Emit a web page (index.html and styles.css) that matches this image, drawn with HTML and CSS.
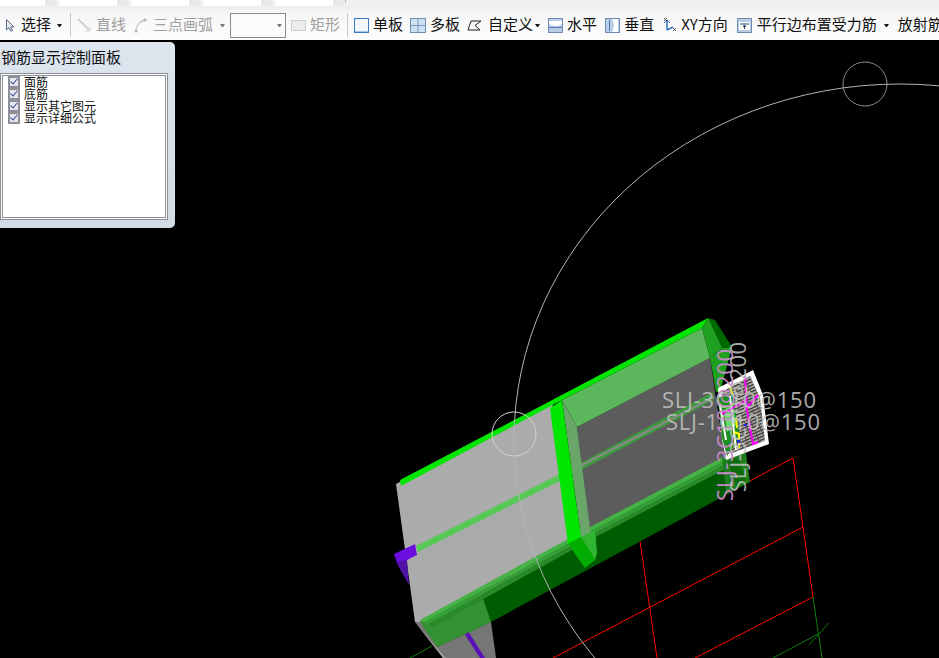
FILE: index.html
```html
<!DOCTYPE html>
<html lang="zh">
<head>
<meta charset="utf-8">
<title>钢筋显示控制面板</title>
<link rel="stylesheet" href="styles.css">
</head>
<body>
<div class="app">
  <div class="tabstrip">
    <span class="tab first"></span><span class="tab"></span><span class="tab"></span><span class="tab"></span><span class="tab"></span><span class="tabsep"></span>
  </div>
  <div class="toolbar">
    <div class="tool t-select">
      <svg class="ico-cursor" width="10" height="15" viewBox="0 0 10 15"><path d="M1.5 1.5v10.5l2.6-2.4 1.8 3.6 1.6-.8-1.8-3.500h3.200z" fill="#e8ecf4" stroke="#5f6f8c"/></svg>
      <span>选择</span>
    </div>
    <i class="caret c-select"></i>
    <i class="sep s1"></i>
    <div class="tool off t-line">
      <svg width="14" height="15" viewBox="0 0 14 15"><path d="M1 1l11 11" stroke="#c4c4c4" stroke-width="1.600"/><path d="M8 13h5V8" fill="none" stroke="#d8d8d8"/></svg>
      <span>直线</span>
    </div>
    <div class="tool off t-arc">
      <svg width="13" height="15" viewBox="0 0 13 15"><path d="M2 13C2 7 6 3 11 2" fill="none" stroke="#c8c8c8" stroke-width="1.300"/><circle cx="2" cy="13" r="1.600" fill="#b4b4b4"/><circle cx="11" cy="2" r="1.600" fill="#b4b4b4"/></svg>
      <span>三点画弧</span>
    </div>
    <i class="caret muted c-arc"></i>
    <div class="combo"><i class="caret muted"></i></div>
    <div class="tool off t-rect">
      <svg width="15" height="11" viewBox="0 0 15 11"><rect x=".5" y=".5" width="14" height="10" fill="#ececec" stroke="#cfcfcf"/></svg>
      <span>矩形</span>
    </div>
    <i class="sep s2"></i>
    <div class="tool t-board">
      <svg width="15" height="15" viewBox="0 0 15 15"><rect x=".5" y=".5" width="14" height="14" fill="#f2f7fd" stroke="#3f78c4"/><path d="M1 13.500h13" stroke="#a8c4ea"/></svg>
      <span>单板</span>
    </div>
    <div class="tool t-multi">
      <svg width="16" height="15" viewBox="0 0 16 15"><rect x=".5" y=".5" width="15" height="14" fill="#cfe0f2" stroke="#6d8db3"/><path d="M8 1v13M1 7.500h14" stroke="#7c9ac0"/></svg>
      <span>多板</span>
    </div>
    <div class="tool t-custom">
      <svg width="16" height="13" viewBox="0 0 16 13"><path d="M4 2h10L8 6.500l5 4.500H1z" fill="none" stroke="#222"/></svg>
      <span>自定义</span>
    </div>
    <i class="caret c-custom"></i>
    <div class="tool t-h">
      <svg width="15" height="15" viewBox="0 0 15 15"><rect x=".5" y=".5" width="14" height="14" fill="#b9cde6" stroke="#6d8db3"/><path d="M1 3h13v3c-4 2.500-9 2.500-13 0z" fill="#fff"/><path d="M1 9.500h13" stroke="#4f79ad"/></svg>
      <span>水平</span>
    </div>
    <div class="tool t-v">
      <svg width="15" height="15" viewBox="0 0 15 15"><rect x=".5" y=".5" width="14" height="14" fill="#b9cde6" stroke="#6d8db3"/><path d="M7 1h6v13H7c2.500-4 2.500-9 0-13z" fill="#fff"/><path d="M4.500 2v11" stroke="#4f79ad"/></svg>
      <span>垂直</span>
    </div>
    <div class="tool t-xy">
      <svg width="16" height="16" viewBox="0 0 16 16"><path d="M6 4v9M6 13l6-3" fill="none" stroke="#2f6fc0" stroke-width="1.500"/><path d="M3 6l3-3 3 3" fill="none" stroke="#2f6fc0"/><path d="M3 1l3 3M6 1L3 4M12 11l3 3M15 11l-3 3" stroke="#333" stroke-width=".8"/></svg>
      <span>XY方向</span>
    </div>
    <div class="tool t-par">
      <svg width="15" height="15" viewBox="0 0 15 15"><rect x=".5" y=".5" width="14" height="14" fill="#b9cde6" stroke="#6d8db3"/><rect x="2" y="4" width="11" height="8" fill="#fff"/><path d="M3 6h9M7.500 7v4M6 9l1.500-2L9 9" fill="none" stroke="#27466f"/></svg>
      <span>平行边布置受力筋</span>
    </div>
    <i class="caret c-par"></i>
    <div class="tool t-last"><span>放射筋</span></div>
  </div>
  <div class="viewport">
    <svg class="scene" width="939" height="618" viewBox="0 40 939 618">
      <defs>
        <pattern id="hatch" width="6" height="3" patternUnits="userSpaceOnUse" patternTransform="rotate(-24)">
          <rect width="6" height="3" fill="#b8b4ac"/>
          <rect y="0" width="6" height="1.300" fill="#2a2a2a"/>
          <rect x="4" width="1" height="3" fill="#555"/>
        </pattern>
      </defs>
      <!-- grid -->
      <g fill="none">
        <path stroke="#ff0000" d="M748 482L793 458 813 597 695 658M803 527L553 658M640 541L657 658"/>
        <path stroke="#0b7f0b" d="M813 597L822 658M773 658L818 634M809 645L829 623M410 658L432 646"/>
      </g>
      <circle cx="865" cy="84" r="22" fill="none" stroke="#8c8c8c"/>
      <!-- lower column -->
      <path fill="#767676" d="M415 622L491 622 496 658 443 658z"/>
      <path fill="#9a9a9a" d="M415 622L430 640 446 658 443 658z"/>
      <path fill="#2f6f6f" d="M451 611L455 609 468 631 464 633z"/>
      <path fill="#5a10b8" d="M464 633L468 631 485 658 480 658z"/>
      <!-- grey slab -->
      <path fill="#ababab" d="M396 484L552 401 570 546 420 622 415 622z"/>
      <!-- dark panel -->
      <path fill="#5c5c5c" d="M577 427L710 358 725 458 590 532z"/>
      <!-- dark green band -->
      <path fill="#005c00" d="M428 624L590 530 725 460 743 455 750 482 491 622 437 647z"/>
      <path fill="#339133" d="M420 622L480 590 491 622 437 647z"/>
      <path fill="#45b245" d="M420 620L590 527 725 456 725 461 590 532 424 622z"/>
      <path fill="#369e36" d="M424 622L590 532 725 461 725 465 590 536 428 624z"/>
      <path fill="#2a8a2a" d="M428 624L590 536 725 465 725 469 590 540 433 627z"/>
      <!-- rail -->
      <path fill="#57c957" d="M416 546L562 473 562 480 418 552z"/>
      <path fill="#3e9a3e" d="M562 473L713 392 714 400 562 480z"/>
      <path fill="none" stroke="#8a8a8a" stroke-width="2" d="M580 466L714 397"/>
      <!-- transparent cap -->
      <path fill="#5cb75c" d="M562 400L702 328 710 358 577 427z"/>
      <path fill="#6aa66a" d="M562 400L577 427 590 528 597 553 581 537z"/>
      <!-- bright green -->
      <path fill="#00e600" d="M400 480L708 318 702 328 562 400 401 486z"/>
      <path fill="#00e600" d="M550 408L562 400 581 537 568 544z"/>
      <path fill="#00ad00" d="M568 544L581 537 595 560 585 568z"/>
      <path fill="#2fb52f" d="M581 537L595 530 597 553 595 560z"/>
      <path fill="#1fa01f" d="M710 358L722 348 732 347 720 392 716 392z"/>
      <path fill="#20a020" d="M702 328L708 318 712 320 722 348 710 358z"/>
      <path fill="#006a00" d="M708 318L715 320 732 347 722 348z"/>
      <path fill="#1f7f1f" d="M722 458L745 447 750 482 726 492z"/>
      <path fill="#0d6d0d" d="M728 462L738 457 746 480 736 486z"/>
      <!-- purple corner -->
      <path fill="#6a0fe0" d="M394 554L415 544 417 555 407 560 405 567 397 563z"/>
      <path fill="#4e12a8" d="M396 562L407 560 409 585z"/>
      <circle cx="514" cy="434" r="22" fill="none" stroke="#d4d4d4"/>
      <ellipse cx="900" cy="440" rx="386" ry="356" fill="none" stroke="#b4b4b4"/>
      <!-- rebar cluster -->
      <path fill="#fff" d="M718 388L753 370 763 395 769 444 726 460 722 440z"/>
      <path fill="url(#hatch)" d="M722 392L750 376 760 398 765 441 732 453 726 438z"/>
      <path fill="#1c8f1c" d="M718 398L732 392 740 438 727 456 722 438z"/>
      <path fill="#6fd86f" d="M724 410L733 404 736 425 727 432z"/>
      <path fill="none" stroke="#fff" stroke-width="2" d="M720 405L726 440M730 396L736 450"/>
      <path fill="none" stroke="#ff00ff" stroke-width="2" d="M745 376L747 410 753 444 758 442M722 414L747 400M745 410L758 395"/>
      <path fill="none" stroke="#ffff00" stroke-width="2" d="M730 387L733 396M736 418L737 428M734 432L739 434 739 448"/>
      <path fill="#2424e0" d="M737 440h3v3h-3zM744 424h3v2h-3z"/>
      <path fill="none" stroke="#fff" stroke-width="2" d="M726 458L768 443"/>
      <!-- labels -->
      <g>
        <text class="lbl pink" transform="translate(733 501) rotate(-90)" textLength="152">SLJ-3C10@200</text>
        <text class="lbl grey" transform="translate(746 492) rotate(-90)" textLength="150">SLJ-3C10@200</text>
        <text class="lbl grey" x="662" y="408" textLength="154">SLJ-3C10@150</text>
        <text class="lbl grey" x="666" y="430" textLength="154">SLJ-1C10@150</text>
      </g>
    </svg>
    <aside class="panel">
      <h2 class="panel-title">钢筋显示控制面板</h2>
      <ul class="checklist">
        <li><i class="check"></i>面筋</li>
        <li><i class="check"></i>底筋</li>
        <li><i class="check"></i>显示其它图元</li>
        <li><i class="check"></i>显示详细公式</li>
      </ul>
    </aside>
  </div>
</div>
</body>
</html>
```
FILE: styles.css
```css
* { box-sizing: border-box; }
html, body { margin: 0; padding: 0; height: 100%; background: #000; overflow: hidden; }
body { font-family: "Noto Sans CJK SC", "Liberation Sans", sans-serif; color: #111; }
.app { display: flex; flex-direction: column; width: 939px; height: 658px; }

.tabstrip { display: flex; flex: 0 0 10px; height: 10px; background: #f0f0f0; align-items: flex-start; }
.tab { flex: 0 0 72px; width: 72px; height: 6px; background: linear-gradient(to right, #fff 0 58px, #e9e9e9 58px 69px, #f0f0f0 69px); }
.tab.first { flex-basis: 59px; width: 59px; background: linear-gradient(to right, #fff 0 45px, #e9e9e9 45px 56px, #f0f0f0 56px); }
.tabsep { width: 1px; height: 3px; margin-left: -2px; background: #bbb; }

.toolbar { display: flex; align-items: center; flex: 0 0 30px; height: 30px; padding-left: 5px; background: linear-gradient(#f5f5f5, #fdfdfd); font-size: 15px; line-height: 20px; white-space: nowrap; overflow: hidden; }
.tool { display: flex; align-items: center; flex: 0 0 auto; gap: 5px; }
.tool span { position: relative; top: -1px; }
.tool svg { flex: 0 0 auto; display: block; }
.tool.off { color: #a0a0a0; }
.ico-cursor { margin-right: 1px; }

.caret { flex: 0 0 5px; width: 0; height: 0; border-left: 2.5px solid transparent; border-right: 2.5px solid transparent; border-top: 3px solid #111; }
.caret.muted { border-top-color: #777; }
.c-select { margin-left: 6px; }
.sep { flex: 0 0 1px; width: 1px; height: 24px; background: #c8c8c8; }
.s1 { margin-left: 8px; margin-right: 6px; }
.t-arc { margin-left: 8px; gap: 6px; }
.c-arc { margin-left: 7px; }
.combo { display: flex; align-items: center; justify-content: flex-end; flex: 0 0 56px; height: 25px; margin-left: 5px; padding-right: 3px; background: #fbfbfb; border: 1px solid #8a8a8a; }
.t-rect { margin-left: 5px; gap: 4px; }
.s2 { margin-left: 7px; margin-right: 6px; }
.t-board { gap: 4px; }
.t-multi { margin-left: 7px; gap: 4px; }
.t-custom { margin-left: 7px; }
.c-custom { margin-left: 2px; }
.t-h { margin-left: 8px; gap: 4px; }
.t-v { margin-left: 8px; gap: 4px; }
.t-xy { margin-left: 7px; gap: 4px; }
.t-par { margin-left: 9px; }
.c-par { margin-left: 7px; }
.t-last { margin-left: 9px; }

.viewport { position: relative; flex: 1 1 auto; background: #000; overflow: hidden; }
.scene { display: block; }
.lbl { font-family: "Open Sans", "Liberation Sans", sans-serif; font-size: 22px; }
.grey { fill: #c0c0c0; fill-opacity: .9; }
.pink { fill: #c688c8; }

.panel { position: absolute; left: 0; top: 2px; width: 175px; height: 186px; padding-right: 7px; background: linear-gradient(to bottom, #dde5ef, #d2dbe6); border-radius: 0 5px 5px 0; }
.panel-title { margin: 0; height: 31px; padding: 5px 0 0 1px; font-size: 15px; line-height: 20px; font-weight: 400; color: #111; white-space: nowrap; }
.checklist { list-style: none; margin: 0; height: 147px; padding: 2px 0 0 7px; background: #fff; border: 1px solid #8b8f94; box-shadow: inset 0 0 0 1px #fff, inset 0 0 0 2px #8b8f94; font-size: 12px; line-height: 12px; }
.checklist li { display: flex; align-items: center; height: 12px; white-space: nowrap; }
.check { position: relative; flex: 0 0 12px; width: 12px; height: 12px; margin-right: 4px; background: #e4e6ee; border: 2px solid #8f8f99; }
.check::after { content: ""; position: absolute; left: 2px; top: -1px; width: 3px; height: 6px; border: solid #3c4c9c; border-width: 0 1.500px 1.500px 0; transform: rotate(40deg); }
```
